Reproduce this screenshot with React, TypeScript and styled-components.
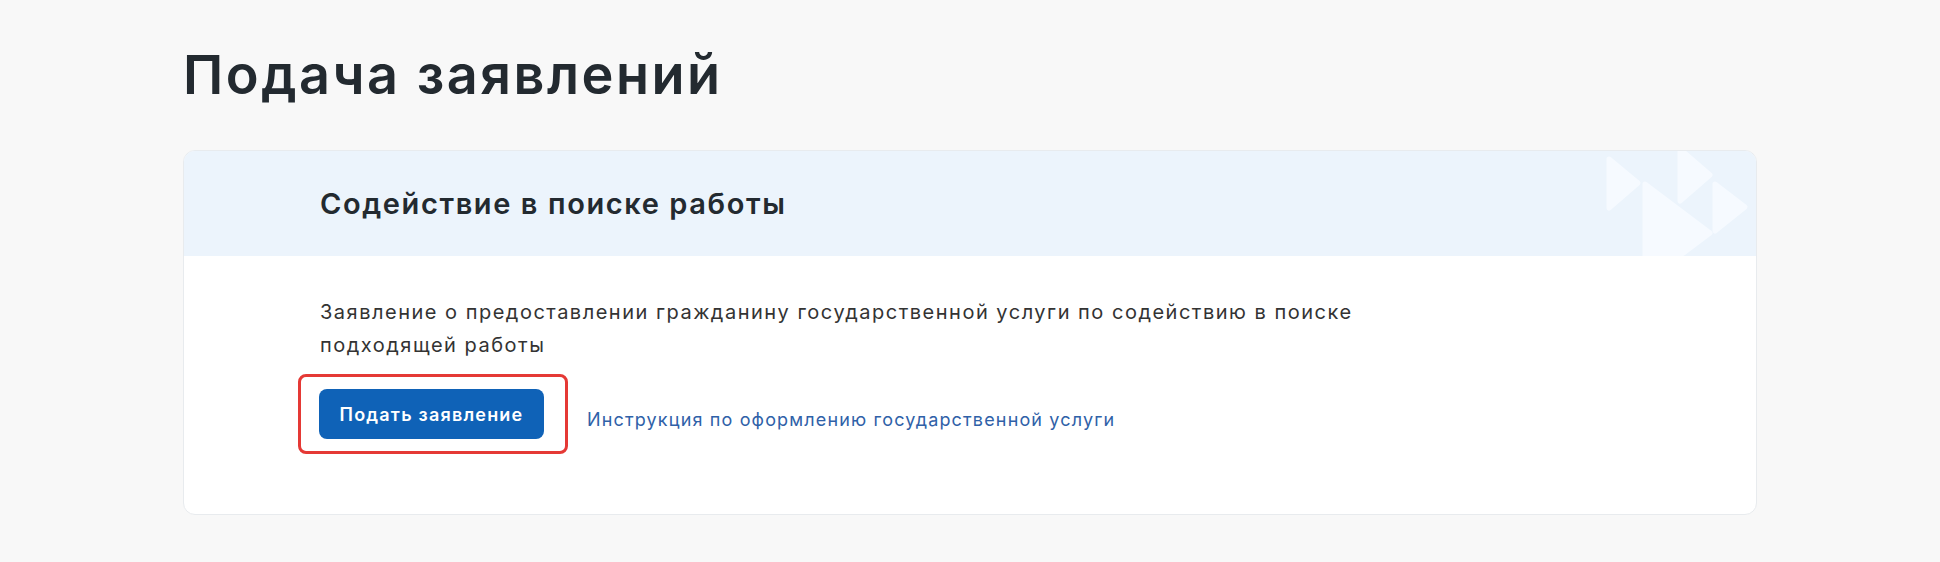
import styled, { createGlobalStyle } from "styled-components";

const GlobalStyle = createGlobalStyle`
  body {
    margin: 0;
    background: #f8f8f8;
    font-family: Inter, "Noto Sans", sans-serif;
    color: #232a30;
  }
`;

const Page = styled.div`
  padding: 0 183px;
  min-height: 562px;
  box-sizing: border-box;
`;

const Title = styled.h1`
  margin: 0;
  padding-top: 40px;
  font-size: 54px;
  line-height: 70px;
  font-weight: 600;
  letter-spacing: 2.5px;
  color: #232a30;
`;

const Card = styled.section`
  margin-top: 40px;
  background: #fff;
  border: 1px solid #e8ebee;
  border-radius: 12px;
  overflow: hidden;
`;

const CardHead = styled.div`
  position: relative;
  height: 105px;
  padding: 0 136px;
  display: flex;
  align-items: center;
  background: #ecf4fc;
`;

const CardTitle = styled.h2`
  margin: 0;
  font-size: 29px;
  font-weight: 600;
  letter-spacing: 1.6px;
  color: #232a30;
`;

const Decor = styled.svg`
  position: absolute;
  top: 0;
  right: 0;
`;

const CardBody = styled.div`
  padding: 40px 136px 60px;
`;

const Text = styled.p`
  margin: 0;
  max-width: 1100px;
  font-size: 20px;
  line-height: 33px;
  letter-spacing: 1.5px;
  color: #333;
`;

const Actions = styled.div`
  margin-top: 12px;
  display: flex;
  align-items: center;
  gap: 19px;
`;

const Highlight = styled.div`
  margin-left: -22px;
  padding: 12px 21px 12px 18px;
  border: 3px solid #e53935;
  border-radius: 8px;
  display: flex;
`;

const Button = styled.button`
  width: 225px;
  height: 50px;
  padding: 0;
  border: 0;
  border-radius: 8px;
  background: #0f62b7;
  color: #fff;
  font-family: inherit;
  font-size: 18px;
  font-weight: 600;
  letter-spacing: 1.2px;
  cursor: pointer;
`;

const Link = styled.a`
  margin-top: 11px;
  font-size: 18px;
  letter-spacing: 1.15px;
  color: #2f61a8;
  text-decoration: none;
`;

export default function App() {
  const tri = "#f6faff";
  return (
    <>
      <GlobalStyle />
      <Page>
        <Title>Подача заявлений</Title>
        <Card>
          <CardHead>
            <CardTitle>Содействие в поиске работы</CardTitle>
            <Decor width="160" height="105" viewBox="0 0 160 105">
              <g fill={tri} stroke={tri} strokeWidth="5" strokeLinejoin="round">
                <polygon points="13,8 42,32 13,57" />
                <polygon points="49,33 114,82 49,131" />
                <polygon points="84,-2 114,24 84,50" />
                <polygon points="119,33 149,56 119,80" />
              </g>
            </Decor>
          </CardHead>
          <CardBody>
            <Text>
              Заявление о предоставлении гражданину государственной услуги по содействию в поиске подходящей работы
            </Text>
            <Actions>
              <Highlight>
                <Button>Подать заявление</Button>
              </Highlight>
              <Link href="#">Инструкция по оформлению государственной услуги</Link>
            </Actions>
          </CardBody>
        </Card>
      </Page>
    </>
  );
}
